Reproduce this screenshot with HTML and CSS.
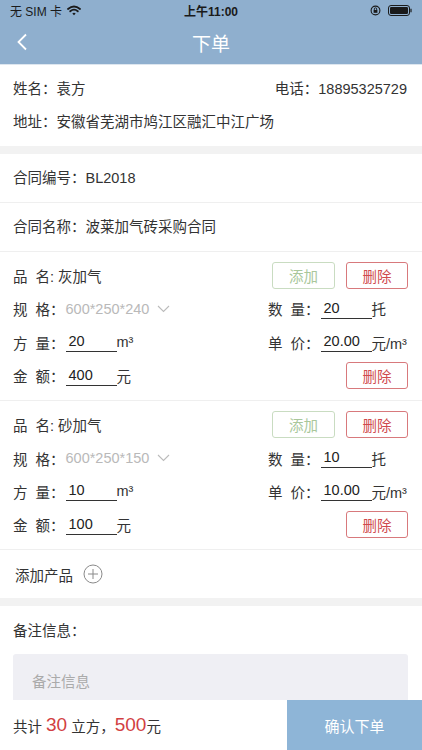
FILE: index.html
```html
<!DOCTYPE html>
<html lang="zh-CN">
<head>
    <meta charset="UTF-8">
    <meta name="viewport" content="width=device-width, initial-scale=1.0">
    <title>下单</title>
    <link rel="stylesheet" href="styles.css">
</head>
<body>

    <div class="header">
        <div class="status">
            <div class="status-left">
                无 SIM 卡
                <svg class="wifi" width="14" height="11" viewBox="0 0 14 11">
                    <path d="M1 4 Q7 -1 13 4" stroke="#1a1a1a" stroke-width="1.8" fill="none" stroke-linecap="round"/>
                    <path d="M3.2 6.3 Q7 3 10.8 6.3" stroke="#1a1a1a" stroke-width="1.8" fill="none" stroke-linecap="round"/>
                    <path d="M5.3 8.5 L7 10.3 L8.7 8.5 Q7 7 5.3 8.5 Z" fill="#1a1a1a"/>
                </svg>
            </div>
            <div class="status-time">上午11:00</div>
            <div class="status-right">
                <svg width="11" height="11" viewBox="0 0 11 11">
                    <circle cx="5.5" cy="5.5" r="4.4" stroke="#1a1a1a" stroke-width="1.1" fill="none"/>
                    <rect x="3.6" y="5" width="3.8" height="2.8" fill="#1a1a1a"/>
                    <path d="M4.3 5 V4 A1.2 1.2 0 0 1 6.7 4 V5" stroke="#1a1a1a" stroke-width="0.9" fill="none"/>
                </svg>
                <svg width="25" height="11" viewBox="0 0 25 11">
                    <rect x="0.5" y="0.5" width="21" height="10" rx="2.5" stroke="#1a1a1a" stroke-width="1" fill="none"/>
                    <rect x="2" y="2" width="18" height="7" rx="1.2" fill="#1a1a1a"/>
                    <path d="M23 3.8 V7.2" stroke="#1a1a1a" stroke-width="1.2"/>
                </svg>
            </div>
        </div>
        <div class="nav">
            <svg class="back" width="12" height="18" viewBox="0 0 12 18">
                <path d="M10 1.5 L2.5 9 L10 16.5" stroke="#fff" stroke-width="1.8" fill="none"/>
            </svg>
            <div class="nav-title">下单</div>
        </div>
    </div>

    <div class="section info">
        <div class="info-row">
            <span>姓名：袁方</span>
            <span>电话：18895325729</span>
        </div>
        <div class="info-row">
            <span>地址：安徽省芜湖市鸠江区融汇中江广场</span>
        </div>
    </div>

    <div class="section">
        <div class="line-row">合同编号：BL2018</div>
        <div class="line-row">合同名称：波莱加气砖采购合同</div>

        <div class="product">
            <div class="cell"><span class="lbl"><b>品 名</b>:</span>&nbsp;灰加气</div>
            <div class="cell right">
                <button class="btn btn-add">添加</button>
                <button class="btn btn-del">删除</button>
            </div>
            <div class="cell"><span class="lbl"><b>规 格</b>：</span><span class="spec">600*250*240</span>
                <svg class="down" width="13" height="8" viewBox="0 0 13 8"><path d="M1 1 L6.5 6.5 L12 1" stroke="#bbb" stroke-width="1.1" fill="none"/></svg>
            </div>
            <div class="cell"><span class="lbl"><b>数 量</b>：</span><span class="field">20</span>托</div>
            <div class="cell"><span class="lbl"><b>方 量</b>：</span><span class="field">20</span>m³</div>
            <div class="cell"><span class="lbl"><b>单 价</b>：</span><span class="field">20.00</span>元/m³</div>
            <div class="cell"><span class="lbl"><b>金 额</b>：</span><span class="field">400</span>元</div>
            <div class="cell right"><button class="btn btn-del">删除</button></div>
        </div>

        <div class="product">
            <div class="cell"><span class="lbl"><b>品 名</b>:</span>&nbsp;砂加气</div>
            <div class="cell right">
                <button class="btn btn-add">添加</button>
                <button class="btn btn-del">删除</button>
            </div>
            <div class="cell"><span class="lbl"><b>规 格</b>：</span><span class="spec">600*250*150</span>
                <svg class="down" width="13" height="8" viewBox="0 0 13 8"><path d="M1 1 L6.5 6.5 L12 1" stroke="#bbb" stroke-width="1.1" fill="none"/></svg>
            </div>
            <div class="cell"><span class="lbl"><b>数 量</b>：</span><span class="field">10</span>托</div>
            <div class="cell"><span class="lbl"><b>方 量</b>：</span><span class="field">10</span>m³</div>
            <div class="cell"><span class="lbl"><b>单 价</b>：</span><span class="field">10.00</span>元/m³</div>
            <div class="cell"><span class="lbl"><b>金 额</b>：</span><span class="field">100</span>元</div>
            <div class="cell right"><button class="btn btn-del">删除</button></div>
        </div>

        <div class="add-row">
            添加产品
            <svg class="plus" width="20" height="20" viewBox="0 0 20 20">
                <circle cx="10" cy="10" r="9" stroke="#8a8a8a" stroke-width="1" fill="none"/>
                <path d="M10 5 V15 M5 10 H15" stroke="#8a8a8a" stroke-width="1"/>
            </svg>
        </div>
    </div>

    <div class="section remark">
        <div class="remark-title">备注信息：</div>
        <div class="remark-box">备注信息</div>
    </div>

    <div class="footer">
        <div class="total">共计 <em class="big">30</em> 立方，<em class="big">500</em>元</div>
        <div class="confirm">确认下单</div>
    </div>

</body>
</html>
```

FILE: styles.css
```css
body {
    margin: 0;
    background-color: #f2f2f2;
    font-family: "Liberation Sans", "Noto Sans CJK SC", sans-serif;
    font-size: 14.5px;
    color: #333;
    height: 750px;
    overflow: hidden;
}

.header {
    background-color: #8fafce;
    height: 64px;
}

.status {
    height: 20px;
    display: flex;
    align-items: center;
    justify-content: space-between;
    padding: 0 9px 0 10px;
    font-size: 12px;
    color: #1a1a1a;
    position: relative;
}

.status-left {
    display: flex;
    align-items: center;
    gap: 5px;
}

.status-time {
    position: absolute;
    left: 0;
    right: 0;
    text-align: center;
    font-weight: bold;
    pointer-events: none;
}

.status-right {
    display: flex;
    align-items: center;
    gap: 7px;
}

.nav {
    height: 44px;
    display: flex;
    align-items: center;
    justify-content: center;
    position: relative;
}

.back {
    position: absolute;
    left: 16px;
    top: 13px;
}

.nav-title {
    color: #fff;
    font-size: 19px;
}

.section {
    background-color: #fff;
    margin-top: 8px;
}

.info {
    margin-top: 0;
    border-top: 1px solid #dde6ef;
    padding: 13px 15px 13px 13px;
    display: flex;
    flex-direction: column;
    gap: 11px;
}

.info-row {
    display: flex;
    justify-content: space-between;
    line-height: 22px;
}

.line-row {
    height: 48px;
    line-height: 48px;
    padding-left: 13px;
    border-bottom: 1px solid #efefef;
}

.product {
    display: grid;
    grid-template-columns: 255px 1fr;
    grid-auto-rows: 27px;
    row-gap: 6.4px;
    padding: 10px 14px 11px 13px;
    border-bottom: 1px solid #efefef;
}

.cell {
    display: flex;
    align-items: center;
    white-space: nowrap;
}

.cell.right {
    justify-content: flex-end;
}

.lbl b {
    display: inline-block;
    width: 37px;
    font-weight: normal;
    text-align: justify;
    text-align-last: justify;
}

.spec {
    color: #b9b9b9;
    margin-left: 1px;
}

.down {
    margin-left: 8px;
}

.field {
    display: inline-block;
    width: 48px;
    padding-left: 3px;
    margin-left: 1px;
    line-height: 19px;
    border-bottom: 1px solid #333;
    color: #222;
}

.btn {
    height: 27px;
    box-sizing: border-box;
    background-color: #fff;
    border-radius: 3px;
    font-family: inherit;
    font-size: 14.5px;
    padding: 0;
    cursor: pointer;
}

.btn-add {
    width: 63px;
    border: 1px solid #c9dcc1;
    color: #a9c79b;
    margin-right: 11px;
}

.btn-del {
    width: 62px;
    border: 1px solid #d8797c;
    color: #cf4a4e;
}

.add-row {
    height: 48px;
    display: flex;
    align-items: center;
    padding-left: 15px;
    gap: 10px;
}

.remark {
    padding: 14px 14px 0 13px;
    height: 130px;
    box-sizing: border-box;
    height: 144px;
    overflow: hidden;
}

.remark-title {
    line-height: 22px;
}

.remark-box {
    margin-top: 12px;
    background-color: #efeff4;
    border-radius: 3px;
    height: 90px;
    padding: 17px 19px;
    line-height: 22px;
    color: #aaa;
}

.footer {
    position: fixed;
    left: 0;
    right: 0;
    bottom: 0;
    height: 50px;
    background-color: #fff;
    display: flex;
}

.total {
    flex: 1;
    display: flex;
    align-items: center;
    padding-left: 13px;
    white-space: pre;
}

.big {
    font-style: normal;
    font-size: 19px;
    color: #d23f42;
}

.confirm {
    width: 135px;
    background-color: #8eb5d7;
    color: #fff;
    font-size: 15px;
    display: flex;
    align-items: center;
    justify-content: center;
}
```
